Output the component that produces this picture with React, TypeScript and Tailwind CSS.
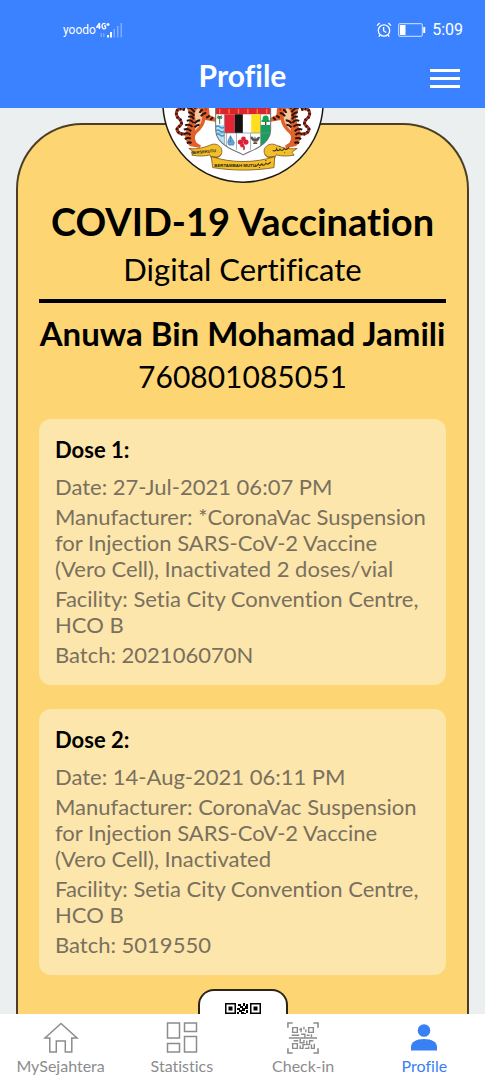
import type { ReactNode } from "react";

type Dose = {
  title: string;
  date: string;
  manufacturer: string;
  facility: string;
  batch: string;
};

const doses: Dose[] = [
  {
    title: "Dose 1:",
    date: "27-Jul-2021 06:07 PM",
    manufacturer:
      "*CoronaVac Suspension for Injection SARS-CoV-2 Vaccine (Vero Cell), Inactivated 2 doses/vial",
    facility: "Setia City Convention Centre, HCO B",
    batch: "202106070N",
  },
  {
    title: "Dose 2:",
    date: "14-Aug-2021 06:11 PM",
    manufacturer:
      "CoronaVac Suspension for Injection SARS-CoV-2 Vaccine (Vero Cell), Inactivated",
    facility: "Setia City Convention Centre, HCO B",
    batch: "5019550",
  },
];

function SignalIcon() {
  return (
    <svg viewBox="0 0 28 16" className="h-4 w-7" fill="#fff" aria-hidden="true">
      <path d="M3.500 1v6M3.500 1 .8 5h3.700M9.500 2C7.500.6 6 2 6 4s1.500 3.500 3.500 2.500V4H8M10.500 2.500h3M12 1v3" fill="none" stroke="#fff" strokeWidth="1.300" />
      <rect x="4.500" y="11" width="1.500" height="4" opacity=".3" />
      <rect x="7" y="11" width="1.500" height="4" opacity=".3" />
      <rect x="11" y="13" width="2" height="2.500" />
      <rect x="14" y="10" width="2" height="5.500" />
      <rect x="17.500" y="7" width="1.500" height="8.500" opacity=".35" />
      <rect x="21" y="4" width="1.500" height="11.500" opacity=".35" />
      <rect x="24.500" y="1" width="1.500" height="14.500" opacity=".35" />
    </svg>
  );
}

function AlarmIcon() {
  return (
    <svg viewBox="0 0 16 16" className="size-4" fill="none" stroke="#fff" strokeWidth="1.3" aria-hidden="true">
      <circle cx="8" cy="8.500" r="5.700" />
      <path d="M7.600 5v3.700l2.600 1.800M1 3.600 3.600 1M15 3.600 12.400 1M4 13l-1.200 1.600M12 13l1.200 1.600" />
    </svg>
  );
}

function BatteryIcon() {
  return (
    <svg viewBox="0 0 28 14" className="h-3.5 w-7" aria-hidden="true">
      <rect x=".7" y=".7" width="23.600" height="12.600" rx="1" fill="none" stroke="#fff" strokeWidth="1" opacity=".8" />
      <rect x="2" y="2" width="5.500" height="10" fill="#fff" />
      <rect x="25.200" y="4" width="2" height="6" rx=".5" fill="#fff" />
    </svg>
  );
}

function Tiger() {
  return (
    <g>
      <path d="M104 30C84 22 76 34 80 48c3 11 16 11 14 24-2 9-13 9-13 17 0 10 12 15 23 14" fill="none" stroke="#a33422" strokeWidth="9" />
      <path d="M104 30C84 22 76 34 80 48c3 11 16 11 14 24-2 9-13 9-13 17 0 10 12 15 23 14" fill="none" stroke="#241410" strokeWidth="9" strokeDasharray="4 7" />
      <path d="M112-34c22-10 48-2 54 16l30 6 2 12-24 6 4 40 24 12-3 9-34-6c-3 20-16 30-27 42-6 8-4 19 2 27l12 7-3 8-30-6c-14-14-18-32-10-52 8-18 15-34 5-52-9-20-14-58-2-69z" fill="#e2602a" />
      <path d="M146 26c10 10 12 24 8 38-4 13-12 22-20 30 2-16 4-30 1-42-2-12 1-22 11-26z" fill="#f4c9a0" />
      <path d="M112 10c10 2 20 9 24 18M110 24c10 0 18 6 23 14M114 38c8 0 14 5 18 11M114 52c8-3 14 0 17 7M110 64c8-4 16 0 20 6M105 77c8-4 18-1 22 5M101 90c9-4 18-1 22 5M101 104c8-5 16-3 20 2M104 118c8-5 13-4 18-1M110 130c6-3 10-3 14 0M150 62c-8 0-12 3-17 9M148 75c-7 0-10 2-15 8M178 48l-10 7M188 53l-8 8M168 40c-8 0-12 4-16 10M158 30c-6 2-8 6-10 10M180-2l-10 8M130-20l16 12M118-12l20 12" fill="none" stroke="#2a1510" strokeWidth="6" />
      <path d="M150-6c12 8 18 24 16 40" fill="none" stroke="#c9391f" strokeWidth="6" />
    </g>
  );
}

function Emblem() {
  return (
    <svg viewBox="36 -234 483 483" className="size-[162px]" role="img" aria-label="Coat of arms">
      <circle cx="277.500" cy="7.500" r="239" fill="#fff" stroke="#1c1a14" strokeWidth="4.500" />
      <Tiger />
      <g transform="translate(555 0) scale(-1 1)">
        <Tiger />
      </g>
      <g>
        <clipPath id="shield">
          <path d="M196-40h164V92c0 20-14 38-38 52-16 8-32 15-44 21-12-6-28-13-44-21-24-14-38-32-38-52z" />
        </clipPath>
        <g clipPath="url(#shield)">
          <path d="M190-40h180v220H190z" fill="#fff" />
          <path d="M190-40h180v84H190z" fill="#dc2430" />
          <path d="M208 28v14M236 28v14M264 28v14M292 28v14M320 28v14M348 28v14" stroke="#e8852b" strokeWidth="4" />
          <path d="M222 44h31v56h-31z" fill="#e32636" />
          <path d="M253 44h24v56h-24z" fill="#14110f" />
          <path d="M302 44h28v56h-28z" fill="#ffdf1b" />
          <path d="M196 76h26v62h-26z" fill="#bfe3f4" />
          <path d="M196 82q6-6 13 0t13 0M196 94q6-6 13 0t13 0M196 106q6-6 13 0t13 0" fill="none" stroke="#3b93cb" strokeWidth="4" />
          <path d="M330 76h30v70h-30z" fill="#18a05a" />
          <path d="M208 54v20M200 54q8-7 16 0M202 48l12 10M214 48l-12 10" fill="none" stroke="#37734a" strokeWidth="3" />
          <path d="M345 60v16" stroke="#5b3b1d" strokeWidth="4" />
          <circle cx="345" cy="57" r="9" fill="#14a052" />
          <path d="M333 64h24" stroke="#14a052" strokeWidth="7" />
          <path d="M232 128h20l-3 8h-14zM240 108l-8 17h18zM240 108v18" fill="#6aa9df" stroke="#3577b3" strokeWidth="2" />
          <path d="M228 100v45M258 100v50M300 100v50M330 44v110M222 44v90M196 100h164" stroke="#7c8790" strokeWidth="2" />
        </g>
        <path d="M196-40V92c0 20 14 38 38 52 16 8 32 15 44 21 12-6 28-13 44-21 24-14 38-32 38-52V-40" fill="none" stroke="#687278" strokeWidth="3" />
        <g fill="#dc2038">
          <circle cx="279" cy="117" r="7" />
          <circle cx="270" cy="127" r="8" />
          <circle cx="286" cy="127" r="8" />
          <circle cx="275" cy="137" r="6" />
          <path d="M278 134q7 5 5 15l-5 2z" />
        </g>
        <path d="M300 112c4-4 9 2 11 6l2-9 3 9c4-6 9-8 12-6-1 9-6 13-11 14l4 7h-14l4-7c-6-2-10-7-11-14z" fill="#55545b" />
        <path d="M309 126h12" stroke="#d49a27" strokeWidth="3" />
      </g>
      <g fill="#f2bf2c" stroke="#80591a" strokeWidth="2.500">
        <path d="M116 146c26 4 50-4 68-12 13-3 23 2 29 12 4 10 0 22-10 26l-20 3-4-10c-18 5-36 4-54 1l7-9z" />
        <path d="M439 146c-26 4-50-4-68-12-13-3-23 2-29 12-4 10 0 22 10 26l20 3 4-10c18 5 36 4 54 1l-7-9z" />
        <path d="M183 170c58 20 132 20 189 0l-2 33c-58 10-124 10-183 0z" />
        <path d="M183 170l20 2 10-8M372 170l-20 2-10-8" fill="none" />
      </g>
      <g fill="#241c0c" fontFamily="Liberation Sans" fontWeight="700" aria-hidden="true">
        <text x="123" y="163" fontSize="12" transform="rotate(-5 123 163)">BERSEKUTU</text>
        <text x="192" y="200" fontSize="13">BERTAMBAH MUTU</text>
      </g>
      <path d="M366 152q9 4 12-5q3 11 10 1q5 9 12-2q5 8 15-3M386 139l2 1M401 157l2 1M312 198q6 4 11-6q4 10 11 0q5 9 12-2q6 7 14-4M325 203l3 0M344 182l3 0" fill="none" stroke="#3a2b0b" strokeWidth="3" />
    </svg>
  );
}

function QrTop() {
  return (
    <svg viewBox="0 0 36 36" className="size-9" role="img" aria-label="QR code">
      <path fillRule="evenodd" d="M0 0h11v11H0zM1.500 1.500v8h8v-8zM3.500 3.500h4v4h-4zM25 0h11v11H25zM26.500 1.500v8h8v-8zM28.500 3.500h4v4h-4zM0 25h11v11H0zM1.500 26.500v8h8v-8zM3.500 28.500h4v4h-4z" />
      <path d="M13 1h3v2h-3zM18 0h2v3h-2zM21 1h2v2h-2zM15 3h3v2h-3zM20 3h3v3h-3zM12 5h3v2h-3zM17 5h3v3h-3zM14 7h3v2h-3zM21 7h2v3h-2zM12 9h2v3h-2zM16 9h3v2h-3zM19 10h2v2h-2zM1 13h4v3H1zM7 14h5v2H7zM14 13h3v4h-3zM20 14h6v2h-6zM28 13h3v3h-3zM33 15h3v4h-3zM2 19h5v3H2zM10 18h4v3h-4zM17 19h4v4h-4zM24 19h4v3h-4zM14 25h4v3h-4zM21 26h5v3h-5zM29 25h5v4h-5zM15 31h3v4h-3zM23 32h4v3h-4zM31 32h4v3h-4z" />
    </svg>
  );
}

function HomeIcon() {
  return (
    <svg viewBox="0 0 36 32" className="h-8 w-9" fill="none" stroke="currentColor" strokeWidth="1.500" aria-hidden="true">
      <path d="M18 1.500 2 16h4.800v14h6.500V19h9v11h6.500V16H34z" />
    </svg>
  );
}

function StatisticsIcon() {
  return (
    <svg viewBox="0 0 32 32" className="size-8" fill="none" stroke="currentColor" strokeWidth="1.500" aria-hidden="true">
      <path d="M1.500 1h12v15h-12zM18.500 1h12v8.500h-12zM1.500 21.500h12V30h-12zM18.500 14.500h12V30h-12z" />
    </svg>
  );
}

function CheckInIcon() {
  return (
    <svg viewBox="0 0 34 34" className="size-8" fill="none" stroke="currentColor" strokeWidth="1.500" aria-hidden="true">
      <path d="M1 6V1h5M28 1h5v5M1 28v5h5M28 33h5v-5M2 17h30" strokeWidth="1.700" />
      <path d="M6 6h5v5H6zM23 6h5v5h-5zM6 23h5v5H6zM13 8h3M15 6v5M18 5v3M20 8v3M5 14h8M15 13h4v4M21 14h3M26 13v3M7 20h5M14 18v4h4v-3M21 20v4h3v-4h4M14 25v3h3v-4h3M19 28h4v-2M26 24v4h3v-5" />
    </svg>
  );
}

function PersonIcon() {
  return (
    <svg viewBox="0 0 30 32" className="h-8 w-[30px]" fill="currentColor" aria-hidden="true">
      <circle cx="15" cy="8.500" r="6.300" />
      <path d="M2 28.500V25c0-5 5-8 13-8s13 3 13 8v3.500z" />
    </svg>
  );
}

function DoseCard({ dose }: { dose: Dose }) {
  return (
    <section className="rounded-xl bg-[#fde6ab] px-4 pt-[18px] pb-[17px] text-[22px] leading-[26px] text-[#79705f]">
      <h3 className="mb-[11px] font-bold text-black">{dose.title}</h3>
      <div className="flex flex-col gap-1">
        <p>Date: {dose.date}</p>
        <p>Manufacturer: {dose.manufacturer}</p>
        <p>Facility: {dose.facility}</p>
        <p>Batch: {dose.batch}</p>
      </div>
    </section>
  );
}

function NavItem({ label, icon, active = false }: { label: string; icon: ReactNode; active?: boolean }) {
  return (
    <a
      href="#"
      aria-current={active ? "page" : undefined}
      className={
        active
          ? "flex flex-1 flex-col items-center gap-0.5 text-[#3880f4]"
          : "flex flex-1 flex-col items-center gap-0.5 text-[#8c8c8e]"
      }
    >
      {icon}
      <span className="text-base leading-5">{label}</span>
    </a>
  );
}

export default function App() {
  return (
    <div className="flex h-dvh flex-col bg-[#ebeff0] font-['Lato',sans-serif] [font-variant-ligatures:none]">
      <header className="shrink-0 bg-[#3a82ff] pb-[13px] text-white">
        <div className="flex items-center justify-between pt-[18px] pr-[22px] pl-[63px] font-['Roboto',sans-serif]">
          <div className="flex items-center text-[12px] leading-6">
            <span>yoodo</span>
            <SignalIcon />
          </div>
          <div className="flex items-center gap-1.5 text-base leading-6">
            <AlarmIcon />
            <BatteryIcon />
            <span>5:09</span>
          </div>
        </div>
        <div className="grid grid-cols-[1fr_auto_1fr] items-center pt-[13px] pr-[25px] pl-[25px]">
          <h1 className="col-start-2 text-[30px] leading-10 font-bold">Profile</h1>
          <button type="button" aria-label="Menu" className="mt-1.5 flex flex-col gap-[5px] justify-self-end">
            <span className="h-[3px] w-[30px] bg-white" />
            <span className="h-[3px] w-[30px] bg-white" />
            <span className="h-[3px] w-[30px] bg-white" />
          </button>
        </div>
      </header>

      <main className="min-h-0 flex-1 overflow-hidden px-4 pt-[15px]">
        <article className="relative rounded-t-[66px] border-2 border-b-0 border-[#4a3f24] bg-[#fdd673] px-[21px] pt-[71px] text-black">
          <div className="absolute -top-[104px] left-1/2 -translate-x-1/2">
            <Emblem />
          </div>
          <div className="-mx-5 text-center">
            <h2 className="text-[38px] leading-[50px] font-bold">COVID-19 Vaccination</h2>
            <p className="text-[31px] leading-[46px]">Digital Certificate</p>
          </div>
          <hr className="mt-[7px] border-t-4 border-black" />
          <div className="-mx-5 pt-[9px] text-center">
            <p className="text-[33px] leading-[42px] font-bold">Anuwa Bin Mohamad Jamili</p>
            <p className="text-[30px] leading-[44px]">760801085051</p>
          </div>
          <div className="mt-[21px] flex flex-col gap-6">
            {doses.map((dose) => (
              <DoseCard key={dose.title} dose={dose} />
            ))}
          </div>
          <div className="mx-auto mt-[14px] flex w-[90px] justify-center rounded-t-2xl border-2 border-b-0 border-[#2c2515] bg-white pt-3 pb-6">
            <QrTop />
          </div>
        </article>
      </main>

      <nav className="flex shrink-0 bg-white pt-2 pb-1" aria-label="Main">
        <NavItem label="MySejahtera" icon={<HomeIcon />} />
        <NavItem label="Statistics" icon={<StatisticsIcon />} />
        <NavItem label="Check-in" icon={<CheckInIcon />} />
        <NavItem label="Profile" icon={<PersonIcon />} active />
      </nav>
    </div>
  );
}
